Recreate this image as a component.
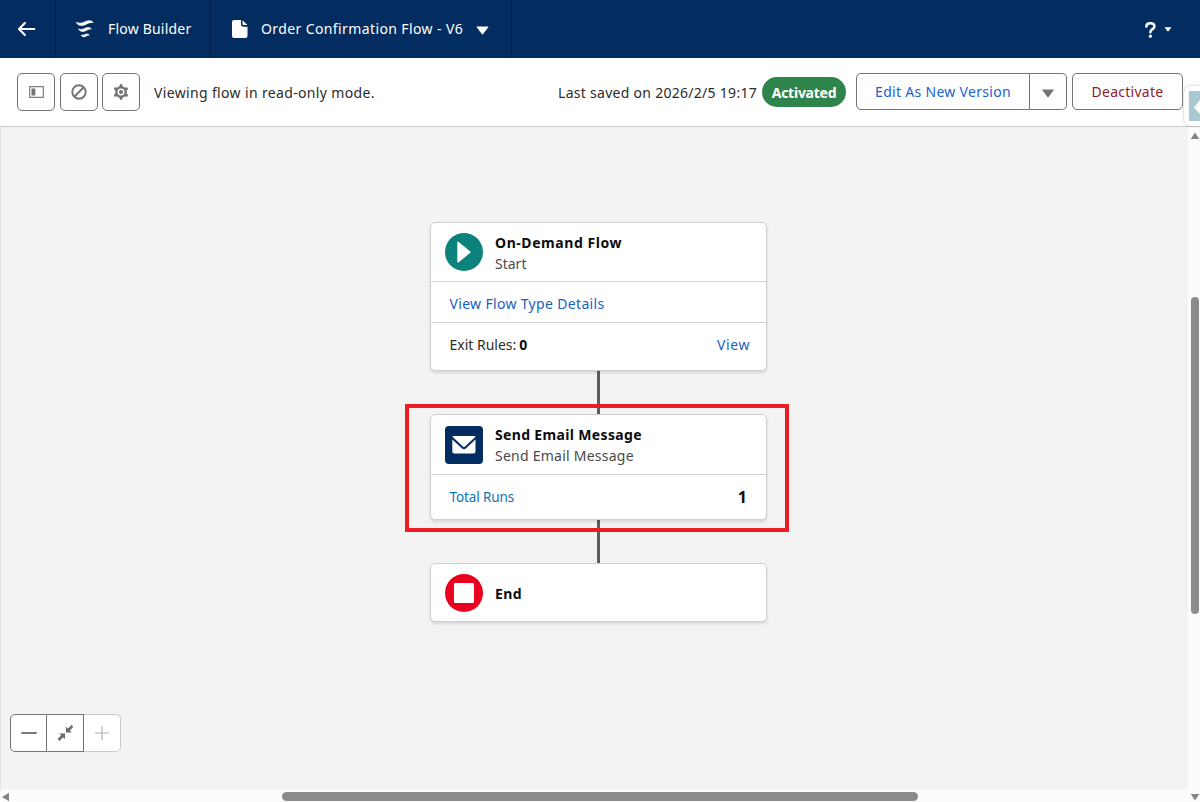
<div class="app">
  <header>
    <div class="back">
      <svg width="20" height="18" viewBox="0 0 20 18"><path d="M8.900 3 3 9l5.900 6M3.300 9h15" fill="none" stroke="#fff" stroke-width="2.100" stroke-linecap="round" stroke-linejoin="round" /></svg>
    </div>
    <div class="brand">
      <svg width="20" height="20" viewBox="0 0 20 20" fill="#fff" stroke="#fff" stroke-width=".7" stroke-linejoin="round">
        <path d="M1.200 3.300C4 4.600 6.600 4.300 9.700 2.900 13 1.400 16 1 18.200 3.500c-3.100-.3-5 .6-7.400 1.900C7.300 7.300 3 6.900 1.200 3.300Z" />
        <path d="M3.600 10c2.200.9 4 .4 6.100-.6 2.500-1.200 4.600-1.400 6.600.5-2.300 0-3.700.7-5.300 1.600-3.100 1.700-6 1.200-7.400-1.500Z" />
        <path d="M6.200 16.100c1.500.4 2.500 0 3.800-.6 1.600-.7 2.900-.8 4.200.5-1.500.1-2.300.6-3.300 1.200-1.900 1.100-3.900.8-4.700-1.100Z" />
      </svg>
      <span class="t t-brand">Flow Builder</span>
    </div>
    <div class="doc">
      <svg width="16" height="18" viewBox="0 0 16 18" fill="#fff"><path d="M2 0h7v4.500A2.200 2.200 0 0 0 11.200 6.700H15.500V16a2 2 0 0 1-2 2H2a2 2 0 0 1-2-2V2a2 2 0 0 1 2-2Z" /><path d="M10.500.2 15.400 5h-4a.9.9 0 0 1-.9-.9Z" /></svg>
      <span class="t t-doc">Order Confirmation Flow - V6</span>
      <svg class="caret" width="13" height="9" viewBox="0 0 13 9"><path d="M1 .5h11a.4.4 0 0 1 .3.700L6.900 8.300a.5.5 0 0 1-.8 0L.7 1.200A.4.4 0 0 1 1 .5Z" fill="#fff" /></svg>
    </div>
    <div class="help">
      <svg width="11" height="16" viewBox="0 0 11 16"><path d="M1.400 4.500C1.400 2.500 3 1.300 5.300 1.300s4.100 1.200 4.100 3.100c0 2.800-4 2.700-4 5.800" fill="none" stroke="#fff" stroke-width="2.500" stroke-linecap="round" /><circle cx="5.400" cy="14.200" r="1.600" fill="#fff" /></svg>
      <svg width="8" height="5" viewBox="0 0 8 5"><path d="M.5.200h7L4 4.800Z" fill="#fff" /></svg>
    </div>
  </header>

  <div class="toolbar">
    <div class="tools">
      <button class="tool" aria-label="Toggle panel"><svg width="15" height="12" viewBox="0 0 15 12"><rect x=".65" y=".65" width="13.700" height="10.700" fill="none" stroke="#858585" stroke-width="1.300" /><rect x="2.500" y="2.500" width="3.800" height="7" fill="#747474" /></svg></button>
      <button class="tool" aria-label="Disable"><svg width="16" height="16" viewBox="0 0 16 16" fill="none" stroke="#747474" stroke-width="1.900"><circle cx="8" cy="8" r="6.700" /><path d="m3.500 12.500 9-9" /></svg></button>
      <button class="tool" aria-label="Settings"><svg width="16" height="16" viewBox="0 0 16 16"><path d="M8 2.700V1.500M8 13.300v1.200M3.400 5.300l-1-.6M12.600 10.700l1 .6M3.400 10.700l-1 .6M12.600 5.300l1-.6" stroke="#747474" stroke-width="2.800" stroke-linecap="round" /><circle cx="8" cy="8" r="4.700" fill="none" stroke="#747474" stroke-width="2.400" /><circle cx="8" cy="8" r="2.100" fill="#747474" /></svg></button>
    </div>
    <span class="t t-mode">Viewing flow in read-only mode.</span>
    <div class="right">
      <span class="t t-saved">Last saved on 2026/2/5 19:17</span>
      <span class="badge"><span class="t t-act">Activated</span></span>
      <div class="group">
        <button class="edit"><span class="t t-edit">Edit As New Version</span></button>
        <button class="more" aria-label="More"><svg width="14" height="9" viewBox="0 0 14 9"><path d="M.8.500h12.400L7 8.700Z" fill="#747474" /></svg></button>
      </div>
      <button class="deact"><span class="t t-deact">Deactivate</span></button>
    </div>
    <div class="tab"><div class="tabin"><svg width="11" height="30" viewBox="0 0 11 30"><path d="M11 9 5 16.500 11 23Z" fill="#fff" /></svg></div></div>
  </div>

  <div class="work">
    <main>
      <div class="flow">
        <section class="card start">
          <div class="head">
            <svg width="38" height="38" viewBox="0 0 38 38"><circle cx="19" cy="19" r="19" fill="#0b827c" /><path d="M12.300 9.300a.7.7 0 0 1 1.100-.6L25.300 18.400a.9.9 0 0 1 0 1.400L13.400 29.400a.7.7 0 0 1-1.100-.6Z" fill="#fff" /></svg>
            <div class="names"><b><span class="t t-odf">On-Demand Flow</span></b><span class="sub"><span class="t">Start</span></span></div>
          </div>
          <div class="row details"><a href="#details"><span class="t t-vftd">View Flow Type Details</span></a></div>
          <div class="row exit"><span class="t">Exit Rules:</span><b class="t t-zero">0</b><a class="end" href="#view"><span class="t t-view">View</span></a></div>
        </section>
        <div class="line"></div>
        <section class="card send">
          <div class="head">
            <svg width="38" height="38" viewBox="0 0 38 38"><rect width="38" height="38" rx="4" fill="#032d60" /><path d="M8.300 10h21.400c.6 0 .9.5.5.9L20 20.600a1.600 1.600 0 0 1-2.200 0L7.800 10.900c-.4-.4-.1-.9.5-.9Z" fill="#fff" /><path d="M7.300 13.400 16.800 22.300a3.100 3.100 0 0 0 4.300 0L30.500 13.400V25.500a2 2 0 0 1-2 2H9.300a2 2 0 0 1-2-2Z" fill="#fff" /></svg>
            <div class="names"><b><span class="t t-semb">Send Email Message</span></b><span class="sub"><span class="t t-sem">Send Email Message</span></span></div>
          </div>
          <div class="row runs"><a class="stat" href="#runs"><span class="t t-runs">Total Runs</span></a><b class="end one">1</b></div>
          <div class="mark"></div>
        </section>
        <div class="line"></div>
        <section class="card stop">
          <div class="head">
            <svg width="38" height="38" viewBox="0 0 38 38"><circle cx="19" cy="19" r="19" fill="#ea001e" /><rect x="9" y="9" width="20" height="20" rx="1" fill="#fff" /></svg>
            <div class="names"><b><span class="t t-end">End</span></b></div>
          </div>
        </section>
      </div>
      <div class="zoom">
        <button aria-label="Zoom out"><svg width="16" height="16" viewBox="0 0 16 16"><path d="M.3 8h15.500" stroke="#6b6b6b" stroke-width="1.800" /></svg></button>
        <button aria-label="Fit"><svg width="16" height="16" viewBox="0 0 16 16"><path d="M15.500 1 11.500 5M1.500 15l4-4" stroke="#6b6b6b" stroke-width="2.600" /><path d="M9 1.800v5.700h5.700ZM8 14.200V8.500H2.300Z" fill="#6b6b6b" /></svg></button>
        <button class="off" aria-label="Zoom in"><svg width="16" height="16" viewBox="0 0 16 16"><path d="M1 8h14M8 1v14" stroke="#c9c9c9" stroke-width="1.700" /></svg></button>
      </div>
    </main>
    <div class="vbar">
      <svg width="10" height="8" viewBox="0 0 10 8"><path d="M5 .5 9.300 7H.700Z" fill="#858585" /></svg>
      <div class="vthumb"></div>
    </div>
    <div class="hbar">
      <svg width="10" height="10" viewBox="0 0 10 10"><path d="M2 5 9 .8v8.400Z" fill="#858585" /></svg>
      <div class="hthumb"></div>
      <svg class="down" width="10" height="8" viewBox="0 0 10 8"><path d="M5 7.500 9.300 1H.700Z" fill="#858585" /></svg>
    </div>
  </div>
</div>

<style>
  :global(body) { margin: 0; overflow: hidden; }
  .app { width: 1200px; height: 802px; overflow: hidden; background: #fff; font: 14px/20px "Noto Sans", sans-serif; color: #2b2b2b; display: flex; flex-direction: column; }
  svg { display: block; flex: none; }
  button { font: inherit; background: #fff; border: 1px solid #747474; padding: 0; margin: 0; box-sizing: border-box; display: flex; align-items: center; justify-content: center; }
  a { text-decoration: none; color: #1b60c0; }
  .t { display: inline-block; white-space: nowrap; }
  .t-brand { letter-spacing: .2px; }
  .t-doc { letter-spacing: .39px; }
  .t-mode { letter-spacing: .35px; padding-top: 2px; }
  .t-saved { letter-spacing: .28px; padding-top: 2px; }
  .t-act { letter-spacing: -.25px; padding-top: 1px; }
  .t-edit { letter-spacing: .3px; }
  .t-deact { letter-spacing: .25px; }
  .t-odf { letter-spacing: .56px; }
  .t-vftd { letter-spacing: .33px; }
  .t-view { letter-spacing: .6px; }
  .t-semb { letter-spacing: .34px; }
  .t-sem { letter-spacing: .24px; }
  .t-runs { font-size: 13.500px; letter-spacing: -.1px; }
  .t-end { letter-spacing: .4px; }
  .t-zero { margin-left: 3px; }
  header { height: 58px; background: #032d60; color: #fff; display: flex; align-items: stretch; flex: none; }
  header > div { display: flex; align-items: center; box-sizing: border-box; }
  .back { width: 56px; padding-left: 16px; border-right: 1px solid #021f45; }
  .brand { width: 155px; padding-left: 19px; gap: 13px; border-right: 1px solid #021f45; }
  .doc { width: 301px; padding-left: 21px; gap: 13px; border-right: 1px solid #021f45; }
  .caret { margin-top: 2px; }
  .help { margin-left: auto; margin-right: 28px; padding-top: 2px; gap: 8px; }
  .help svg + svg { margin-bottom: 2px; }
  .toolbar { height: 69px; box-sizing: border-box; border-bottom: 1px solid #c9c9c9; display: flex; align-items: center; padding: 0 17px; position: relative; flex: none; }
  .tools { display: flex; gap: 4.500px; margin-right: 14px; }
  .tool { width: 38px; height: 38px; border-radius: 5px; }
  .right { margin-left: auto; display: flex; align-items: center; }
  .badge { height: 30px; width: 84px; margin: 0 10px 0 5px; border-radius: 15px; background: #2e844a; color: #fff; font-weight: 700; display: flex; align-items: center; justify-content: center; }
  .group { display: flex; margin-right: 5px; }
  .group, .deact { position: relative; top: -.5px; }
  .edit { width: 174px; height: 37px; border-radius: 5px 0 0 5px; color: #1a62cf; }
  .more { width: 37px; height: 37px; border-left: 0; border-radius: 0 5px 5px 0; }
  .more svg { margin-top: 3px; }
  .deact { width: 111px; height: 37px; border-radius: 5px; color: #8e1b2c; }
  .tab { position: absolute; right: 0; top: 28px; width: 16px; height: 40px; box-sizing: border-box; padding: 5px 0 5px 5px; background: #fff; border-radius: 7px 0 0 7px; box-shadow: 0 0 3px #bbb; }
  .tabin { height: 30px; background: #a9c8d3; }
  .work { flex: 1; display: grid; grid-template: 663px 12px / 1188px 12px; background: #fcfcfc; }
  main { background: #f3f3f3; border-left: 1px solid #e2e2e2; position: relative; box-sizing: border-box; padding-left: 429px; }
  .flow { width: 337px; padding-top: 95px; display: flex; flex-direction: column; align-items: center; }
  .card { width: 337px; box-sizing: border-box; background: #fff; border: 1px solid #d0d0d0; border-radius: 5px; box-shadow: 0 2px 3px rgba(0,0,0,.12); position: relative; }
  .head { height: 58px; box-sizing: border-box; display: flex; align-items: center; padding-left: 14px; gap: 12px; }
  .names { display: flex; flex-direction: column; padding-top: 1px; }
  .names b, .names .sub { height: 21px; line-height: 21px; }
  b { color: #0c0c0c; font-weight: 700; }
  .sub { color: #4a4a4a; }
  .row { border-top: 1px solid #d4d4d4; display: flex; align-items: center; padding: 0 16px 0 18.500px; box-sizing: border-box; }
  .end { margin-left: auto; }
  .start { height: 149px; }
  .details { height: 41px; padding-top: 3px; }
  .exit { height: 45px; }
  .send { height: 106px; }
  .send .head { height: 59px; }
  .runs { height: 45px; }
  .one { margin-right: 3px; font-size: 16px; }
  .stat { color: #0b76b8; }
  .stop { height: 59px; }
  .stop .head { height: 57px; }
  .line { width: 2.500px; height: 43px; background: #5c5c5c; }
  .mark { position: absolute; left: -26px; top: -11px; width: 384px; height: 128px; box-sizing: border-box; border: 4px solid #ec1c24; }
  .zoom { position: absolute; left: 9px; top: 587px; display: flex; }
  .zoom button { width: 37px; height: 38px; }
  .zoom button:first-child { border-radius: 5px 0 0 5px; }
  .zoom button + button { border-left: 0; }
  .zoom .off { border-radius: 0 5px 5px 0; border-color: #c9c9c9; }
  .vbar { padding: 5px 1px 0 2px; }
  .vthumb { width: 8px; height: 317px; margin: 157px 0 0 1px; border-radius: 4px; background: #8b8b8b; }
  .hbar { grid-column: 1 / 3; display: flex; align-items: center; padding-top: 1px; }
  .hthumb { width: 636px; height: 9px; margin-left: 272px; border-radius: 5px; background: #8b8b8b; }
  .down { margin-left: auto; }
</style>
